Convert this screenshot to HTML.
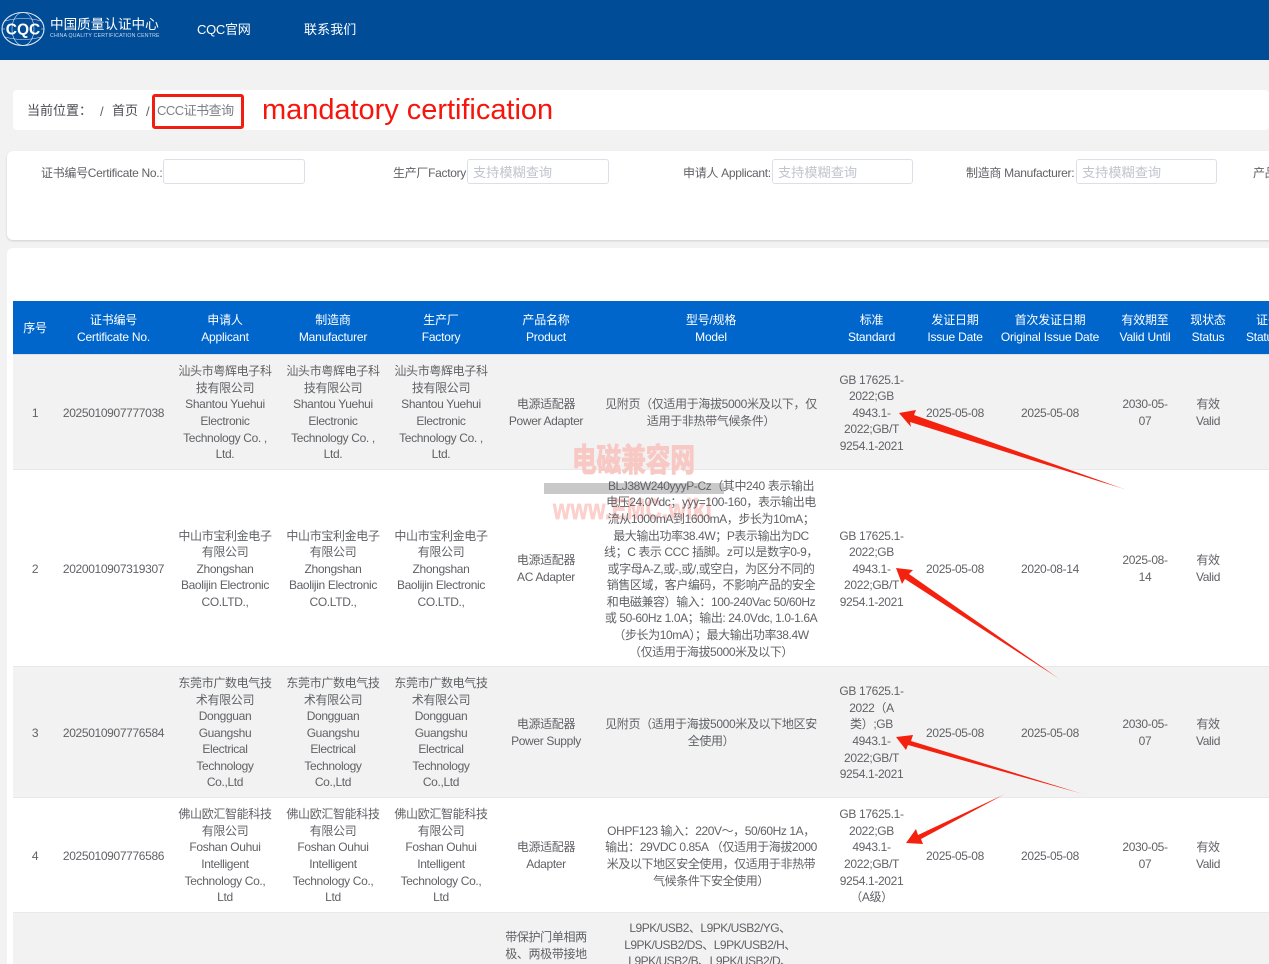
<!DOCTYPE html>
<html><head><meta charset="utf-8">
<style>
html,body{margin:0;padding:0;background:#f2f2f2;}
#p{position:relative;width:1269px;height:964px;overflow:hidden;background:#f2f2f2;font-family:"Liberation Sans","Noto Sans CJK SC",sans-serif;font-size:12px;color:#606266;letter-spacing:-.35px;}
#p div{box-sizing:border-box;}
.a{position:absolute;white-space:nowrap;}
.c{position:absolute;display:flex;align-items:center;justify-content:center;text-align:center;white-space:nowrap;line-height:16.6px;width:200px;transform:translateY(1px);}
.h{color:#fff;letter-spacing:-.2px;}
.inp{position:absolute;top:159px;height:25px;background:#fff;border:1px solid #dcdfe6;border-radius:3px;color:#c0c4cc;font-size:13.2px;line-height:25px;padding-left:5px;letter-spacing:0;}
.lb{position:absolute;top:165px;line-height:17px;text-align:right;white-space:nowrap;color:#606266;letter-spacing:-.3px;}
.row{position:absolute;left:13px;width:1256px;border-bottom:1px solid #e8e8e8;}
</style></head><body>
<div id="p">
<div class="a" style="left:0;top:0;width:1269px;height:60px;background:#004c97"></div>
<svg class="a" style="left:0;top:9px" width="46" height="40" viewBox="0 0 46 40" fill="none" stroke="#dfe9f4" stroke-width="1">
<ellipse cx="23" cy="20" rx="21" ry="16.5" stroke-width="1.1"/>
<ellipse cx="23" cy="20" rx="11" ry="16.5" stroke-width=".6"/>
<path d="M5 12Q23 7 41 12M5 28Q23 33 41 28M2 20H5M41 20H44" stroke-width=".6"/>
<text x="23" y="25.5" text-anchor="middle" font-family="Liberation Sans" font-weight="700" font-size="15.5" fill="#fff" stroke="none" letter-spacing="0">CQC</text>
</svg>
<div class="a" style="left:50px;top:16px;color:#fff;font-size:13.6px;line-height:18px;letter-spacing:0">中国质量认证中心</div>
<div class="a" style="left:50px;top:33px;color:#cfdcec;font-size:5.2px;line-height:7px;font-weight:400;letter-spacing:.2px">CHINA QUALITY CERTIFICATION CENTRE</div>
<div class="a" style="left:197px;top:21px;color:#fff;font-size:13px;line-height:18px;letter-spacing:-.3px">CQC官网</div>
<div class="a" style="left:304px;top:21px;color:#fff;font-size:13px;line-height:18px;letter-spacing:.1px">联系我们</div>

<div class="a" style="left:13px;top:90px;width:1256px;height:40px;background:#fff;border-radius:4px"></div>
<div class="a" style="left:27px;top:102px;font-size:13px;line-height:18px;letter-spacing:0;color:#4a4d53">当前位置：</div>
<div class="a" style="left:100px;top:103px;font-size:13px;line-height:18px;color:#606266">/</div>
<div class="a" style="left:112px;top:102px;font-size:13px;line-height:18px;letter-spacing:0;color:#4a4d53">首页</div>
<div class="a" style="left:146px;top:103px;font-size:13px;line-height:18px;color:#606266">/</div>
<div class="a" style="left:157px;top:102px;font-size:13px;line-height:18px;letter-spacing:-.5px;color:#7b8087">CCC证书查询</div>
<div class="a" style="left:152px;top:94px;width:92px;height:35px;border:3px solid #f01d10;border-radius:3px"></div>
<div class="a" style="left:262px;top:92px;font-size:29px;line-height:36px;color:#f5150c;letter-spacing:-.03px">mandatory certification</div>

<div class="a" style="left:7px;top:151px;width:1270px;height:89px;background:#fff;border-radius:6px;box-shadow:0 1px 2px rgba(0,0,0,.15)"></div>
<div class="lb" style="left:41px;">证书编号Certificate No.:</div>
<div class="inp" style="left:163px;width:142px"></div>
<div class="lb" style="left:393px;">生产厂Factory:</div>
<div class="inp" style="left:467px;width:142px">支持模糊查询</div>
<div class="lb" style="left:683px;">申请人 Applicant:</div>
<div class="inp" style="left:772px;width:141px">支持模糊查询</div>
<div class="lb" style="left:966px;">制造商 Manufacturer:</div>
<div class="inp" style="left:1076px;width:141px">支持模糊查询</div>
<div class="lb" style="left:1253px;">产品</div>

<div class="a" style="left:7px;top:248px;width:1270px;height:730px;background:#fff;border-radius:6px"></div>

<div class="a" style="left:13px;top:301px;width:1256px;height:53px;background:#0066cc"></div>
<div class="row" style="top:354px;height:116px;background:#f2f2f2;border-top:1px solid #dcdfe6"></div>
<div class="row" style="top:470px;height:197px;background:#fff"></div>
<div class="row" style="top:667px;height:131px;background:#f2f2f2"></div>
<div class="row" style="top:798px;height:115px;background:#fff"></div>
<div class="row" style="top:913px;height:60px;background:#f2f2f2"></div>

<!-- header -->
<div class="c h" style="left:-65px;top:301px;height:53px">序号</div>
<div class="c h" style="left:13.5px;top:301px;height:53px">证书编号<br>Certificate No.</div>
<div class="c h" style="left:125px;top:301px;height:53px">申请人<br>Applicant</div>
<div class="c h" style="left:233px;top:301px;height:53px">制造商<br>Manufacturer</div>
<div class="c h" style="left:341px;top:301px;height:53px">生产厂<br>Factory</div>
<div class="c h" style="left:446px;top:301px;height:53px">产品名称<br>Product</div>
<div class="c h" style="left:611px;top:301px;height:53px">型号/规格<br>Model</div>
<div class="c h" style="left:771.5px;top:301px;height:53px">标准<br>Standard</div>
<div class="c h" style="left:855px;top:301px;height:53px">发证日期<br>Issue Date</div>
<div class="c h" style="left:950px;top:301px;height:53px">首次发证日期<br>Original Issue Date</div>
<div class="c h" style="left:1045px;top:301px;height:53px">有效期至<br>Valid Until</div>
<div class="c h" style="left:1108px;top:301px;height:53px">现状态<br>Status</div>
<div class="a h" style="left:1256px;top:312px;line-height:16.6px">证书</div>
<div class="a h" style="left:1246px;top:329px;line-height:16.6px">Status</div>

<!-- row 1 -->
<div class="c" style="left:-65px;top:355px;height:114px">1</div>
<div class="c" style="left:13.5px;top:355px;height:114px">2025010907777038</div>
<div class="c" style="left:125px;top:355px;height:114px">汕头市粤辉电子科<br>技有限公司<br>Shantou Yuehui<br>Electronic<br>Technology Co. ,<br>Ltd.</div>
<div class="c" style="left:233px;top:355px;height:114px">汕头市粤辉电子科<br>技有限公司<br>Shantou Yuehui<br>Electronic<br>Technology Co. ,<br>Ltd.</div>
<div class="c" style="left:341px;top:355px;height:114px">汕头市粤辉电子科<br>技有限公司<br>Shantou Yuehui<br>Electronic<br>Technology Co. ,<br>Ltd.</div>
<div class="c" style="left:446px;top:355px;height:132px;margin-top:-9px">电源适配器<br>Power Adapter</div>
<div class="c" style="left:611px;top:355px;height:132px;margin-top:-9px">见附页（仅适用于海拔5000米及以下，仅<br>适用于非热带气候条件）</div>
<div class="c" style="left:771.5px;top:355px;height:114px">GB 17625.1-<br>2022;GB<br>4943.1-<br>2022;GB/T<br>9254.1-2021</div>
<div class="c" style="left:855px;top:355px;height:114px">2025-05-08</div>
<div class="c" style="left:950px;top:355px;height:114px">2025-05-08</div>
<div class="c" style="left:1045px;top:355px;height:132px;margin-top:-9px">2030-05-<br>07</div>
<div class="c" style="left:1108px;top:355px;height:132px;margin-top:-9px">有效<br>Valid</div>

<!-- watermark -->
<div class="a" style="left:572px;top:443px;font-size:24.6px;line-height:38px;font-weight:700;color:#f8c8c4;letter-spacing:0;transform:scaleY(1.3);-webkit-text-stroke:.8px #f8c8c4">电磁兼容网</div>
<div class="a" style="left:544px;top:483px;width:180px;height:11px;background:#c9c9c9"></div>
<div class="a" style="left:553px;top:498px;font-size:22px;line-height:28px;font-weight:700;color:#fbd0cd;letter-spacing:.5px;transform:scaleY(1.3);transform-origin:0 21.6px;-webkit-text-stroke:.5px #fbd0cd">www.EMC.wiki</div>

<!-- row 2 -->
<div class="c" style="left:-65px;top:470px;height:196px">2</div>
<div class="c" style="left:13.5px;top:470px;height:196px">2020010907319307</div>
<div class="c" style="left:125px;top:470px;height:196px">中山市宝利金电子<br>有限公司<br>Zhongshan<br>Baolijin Electronic<br>CO.LTD.,</div>
<div class="c" style="left:233px;top:470px;height:196px">中山市宝利金电子<br>有限公司<br>Zhongshan<br>Baolijin Electronic<br>CO.LTD.,</div>
<div class="c" style="left:341px;top:470px;height:196px">中山市宝利金电子<br>有限公司<br>Zhongshan<br>Baolijin Electronic<br>CO.LTD.,</div>
<div class="c" style="left:446px;top:470px;height:196px">电源适配器<br>AC Adapter</div>
<div class="c" style="left:611px;top:470px;height:196px;letter-spacing:-.42px">BLJ38W240yyyP-Cz（其中240 表示输出<br>电压24.0Vdc；yyy=100-160，表示输出电<br>流从1000mA到1600mA，步长为10mA；<br>最大输出功率38.4W；P表示输出为DC<br>线；C 表示 CCC 插脚。z可以是数字0-9，<br>或字母A-Z,或-,或/,或空白，为区分不同的<br>销售区域，客户编码，不影响产品的安全<br>和电磁兼容）输入：100-240Vac 50/60Hz<br>或 50-60Hz 1.0A；输出: 24.0Vdc, 1.0-1.6A<br>（步长为10mA）；最大输出功率38.4W<br>（仅适用于海拔5000米及以下）</div>
<div class="c" style="left:771.5px;top:470px;height:196px">GB 17625.1-<br>2022;GB<br>4943.1-<br>2022;GB/T<br>9254.1-2021</div>
<div class="c" style="left:855px;top:470px;height:196px">2025-05-08</div>
<div class="c" style="left:950px;top:470px;height:196px">2020-08-14</div>
<div class="c" style="left:1045px;top:470px;height:196px">2025-08-<br>14</div>
<div class="c" style="left:1108px;top:470px;height:196px">有效<br>Valid</div>

<!-- row 3 -->
<div class="c" style="left:-65px;top:667px;height:130px">3</div>
<div class="c" style="left:13.5px;top:667px;height:130px">2025010907776584</div>
<div class="c" style="left:125px;top:667px;height:130px">东莞市广数电气技<br>术有限公司<br>Dongguan<br>Guangshu<br>Electrical<br>Technology<br>Co.,Ltd</div>
<div class="c" style="left:233px;top:667px;height:130px">东莞市广数电气技<br>术有限公司<br>Dongguan<br>Guangshu<br>Electrical<br>Technology<br>Co.,Ltd</div>
<div class="c" style="left:341px;top:667px;height:130px">东莞市广数电气技<br>术有限公司<br>Dongguan<br>Guangshu<br>Electrical<br>Technology<br>Co.,Ltd</div>
<div class="c" style="left:446px;top:667px;height:130px">电源适配器<br>Power Supply</div>
<div class="c" style="left:611px;top:667px;height:130px">见附页（适用于海拔5000米及以下地区安<br>全使用）</div>
<div class="c" style="left:771.5px;top:667px;height:130px">GB 17625.1-<br>2022（A<br>类）;GB<br>4943.1-<br>2022;GB/T<br>9254.1-2021</div>
<div class="c" style="left:855px;top:667px;height:130px">2025-05-08</div>
<div class="c" style="left:950px;top:667px;height:130px">2025-05-08</div>
<div class="c" style="left:1045px;top:667px;height:130px">2030-05-<br>07</div>
<div class="c" style="left:1108px;top:667px;height:130px">有效<br>Valid</div>

<!-- row 4 -->
<div class="c" style="left:-65px;top:798px;height:114px">4</div>
<div class="c" style="left:13.5px;top:798px;height:114px">2025010907776586</div>
<div class="c" style="left:125px;top:798px;height:114px">佛山欧汇智能科技<br>有限公司<br>Foshan Ouhui<br>Intelligent<br>Technology Co.,<br>Ltd</div>
<div class="c" style="left:233px;top:798px;height:114px">佛山欧汇智能科技<br>有限公司<br>Foshan Ouhui<br>Intelligent<br>Technology Co.,<br>Ltd</div>
<div class="c" style="left:341px;top:798px;height:114px">佛山欧汇智能科技<br>有限公司<br>Foshan Ouhui<br>Intelligent<br>Technology Co.,<br>Ltd</div>
<div class="c" style="left:446px;top:798px;height:114px">电源适配器<br>Adapter</div>
<div class="c" style="left:611px;top:798px;height:114px;letter-spacing:-.42px">OHPF123 输入：220V～，50/60Hz 1A，<br>输出：29VDC 0.85A （仅适用于海拔2000<br>米及以下地区安全使用，仅适用于非热带<br>气候条件下安全使用）</div>
<div class="c" style="left:771.5px;top:798px;height:114px">GB 17625.1-<br>2022;GB<br>4943.1-<br>2022;GB/T<br>9254.1-2021<br>（A级）</div>
<div class="c" style="left:855px;top:798px;height:114px">2025-05-08</div>
<div class="c" style="left:950px;top:798px;height:114px">2025-05-08</div>
<div class="c" style="left:1045px;top:798px;height:114px">2030-05-<br>07</div>
<div class="c" style="left:1108px;top:798px;height:114px">有效<br>Valid</div>

<!-- row 5 -->
<div class="a" style="left:446px;width:200px;top:929px;text-align:center;line-height:16.6px">带保护门单相两<br>极、两极带接地</div>
<div class="a" style="left:610px;width:200px;top:920px;text-align:center;line-height:16.6px;letter-spacing:-.5px">L9PK/USB2、L9PK/USB2/YG、<br>L9PK/USB2/DS、L9PK/USB2/H、<br>L9PK/USB2/B、L9PK/USB2/D、</div>

<!-- arrows -->
<svg class="a" style="left:0;top:0" width="1269" height="964" viewBox="0 0 1269 964">
<defs>
<linearGradient id="g1" gradientUnits="userSpaceOnUse" x1="899" y1="413" x2="1127" y2="490"><stop offset=".9" stop-color="#f5210f"/><stop offset="1" stop-color="#f5210f" stop-opacity=".4"/></linearGradient>
<linearGradient id="g2" gradientUnits="userSpaceOnUse" x1="896" y1="568" x2="1061" y2="680"><stop offset=".9" stop-color="#f5210f"/><stop offset="1" stop-color="#f5210f" stop-opacity=".4"/></linearGradient>
<linearGradient id="g3" gradientUnits="userSpaceOnUse" x1="896" y1="737" x2="1083" y2="794"><stop offset=".9" stop-color="#f5210f"/><stop offset="1" stop-color="#f5210f" stop-opacity=".4"/></linearGradient>
<linearGradient id="g4" gradientUnits="userSpaceOnUse" x1="906" y1="843" x2="1005" y2="794"><stop offset=".9" stop-color="#f5210f"/><stop offset="1" stop-color="#f5210f" stop-opacity=".4"/></linearGradient>
</defs>
<polygon fill="url(#g1)" points="899,413 916,410 914,415 1127,490 910,422 911,427"/>
<polygon fill="url(#g2)" points="896,568 913,570 909,574 1061,680 905,579 902,584"/>
<polygon fill="url(#g3)" points="896,737 913,735 911,741 1083,794 908,745 906,750"/>
<polygon fill="url(#g4)" points="906,843 916,829 918,835 1005,794 921,839 923,844"/>
</svg>
</div>
</body></html>
